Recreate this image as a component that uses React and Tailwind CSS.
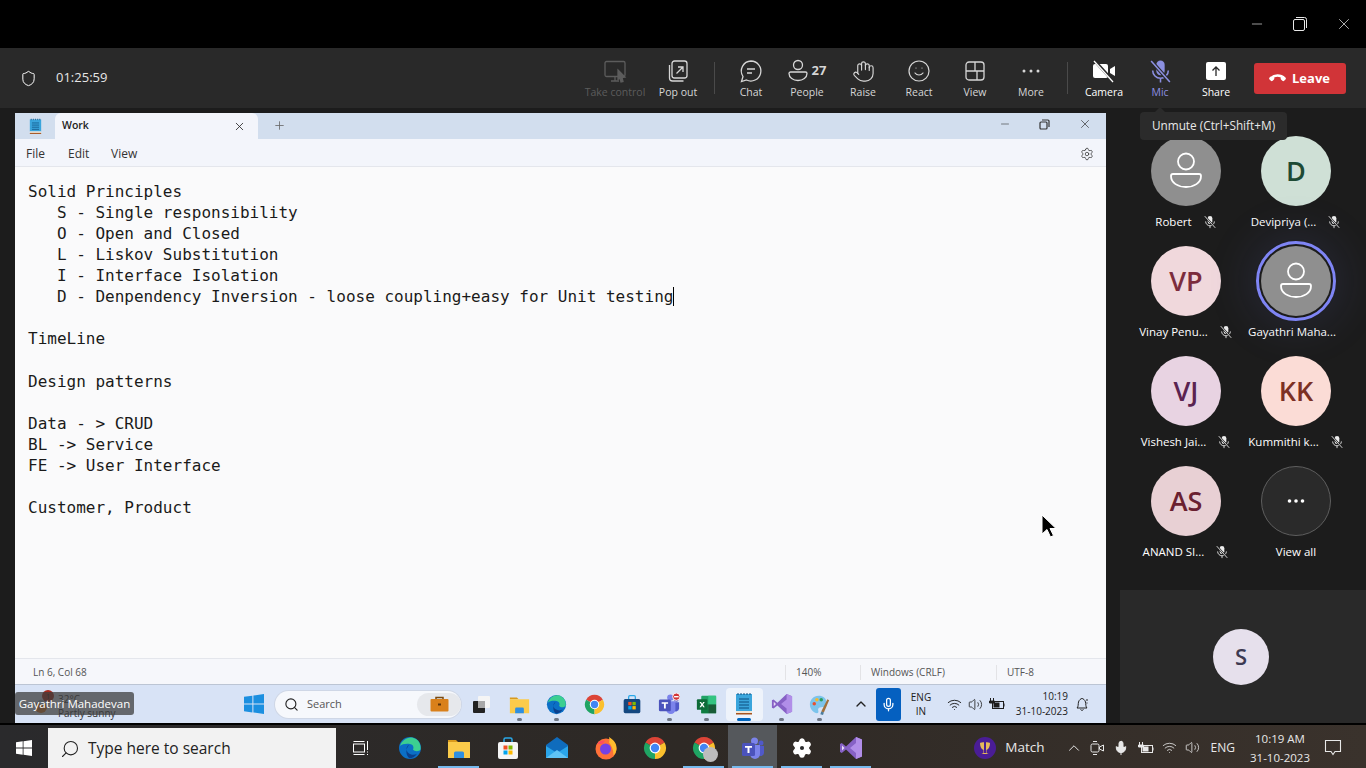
import React from 'react';
import { ChevronUp, Mic, Search, Settings, Volume2, Wifi, X, Minus, Plus, Hand, Smile, Shield, Phone } from 'lucide-react';

const NOTE_LINES = [
  'Solid Principles',
  '   S - Single responsibility',
  '   O - Open and Closed',
  '   L - Liskov Substitution',
  '   I - Interface Isolation',
  '   D - Denpendency Inversion - loose coupling+easy for Unit testing',
  '',
  'TimeLine',
  '',
  'Design patterns',
  '',
  'Data - > CRUD',
  'BL -> Service',
  'FE -> User Interface',
  '',
  'Customer, Product',
];

const PEOPLE = [
  { name: 'Robert', muted: true, person: true, bg: 'bg-[#8f8f8f]', fg: 'text-white' },
  { name: 'Devipriya (...', muted: true, initials: 'D', bg: 'bg-[#cfe0d6]', fg: 'text-[#1d4a34]' },
  { name: 'Vinay Penu...', muted: true, initials: 'VP', bg: 'bg-[#f0d8dc]', fg: 'text-[#7c2c3c]' },
  { name: 'Gayathri Maha...', person: true, ring: true, bg: 'bg-[#8f8f8f]', fg: 'text-white' },
  { name: 'Vishesh Jai...', muted: true, initials: 'VJ', bg: 'bg-[#e8d3e2]', fg: 'text-[#5a2350]' },
  { name: 'Kummithi k...', muted: true, initials: 'KK', bg: 'bg-[#fbdcd6]', fg: 'text-[#7c3024]' },
  { name: 'ANAND SI...', muted: true, initials: 'AS', bg: 'bg-[#e8d0d4]', fg: 'text-[#6a2030]' },
];

// filled mic with a slash, the Teams muted glyph
const MutedMic = ({ size = 14, gap = '#1c1c1c', className }) => (
  <svg width={size} height={size} viewBox="0 0 24 24" fill="none" stroke="currentColor" className={className}>
    <rect x="8" y="1.500" width="8" height="14" rx="4" fill="currentColor" stroke="none" />
    <path d="M4.500 11a7.500 7.500 0 0 0 15 0M12 18.500v4" strokeWidth="1.500" />
    <path d="M3 2l18 20" stroke={gap} strokeWidth="3.500" />
    <path d="M3 2l18 20" strokeWidth="1.500" />
  </svg>
);

const PersonGlyph = () => (
  <svg width="34" height="38" viewBox="0 0 34 38" fill="none" stroke="white" strokeWidth="1.800">
    <circle cx="17" cy="9.500" r="8" />
    <path d="M4 22h26a2 2 0 0 1 2 2c0 7-7 11-15 11S2 31 2 24a2 2 0 0 1 2-2z" />
  </svg>
);

const WinLogo = ({ className = 'fill-white', size = 16 }) => (
  <svg width={size} height={size} viewBox="0 0 16 16" className={className}>
    <path d="M0 2.200 6.700 1.300v6.300H0zM7.500 1.200 16 0v7.600H7.500zM0 8.400h6.700v6.300L0 13.800zM7.500 8.400H16V16l-8.500-1.200z" />
  </svg>
);

const Chrome = ({ size = 24 }) => (
  <svg width={size} height={size} viewBox="0 0 24 24">
    <path d="M12 12 2.470 6.500a11 11 0 0 1 19.060 0z" fill="#dc4437" />
    <path d="M12 12 2.470 6.500A11 11 0 0 0 12 23z" fill="#1fa463" />
    <path d="M12 12l9.530-5.500A11 11 0 0 1 12 23z" fill="#fbc02d" />
    <circle cx="12" cy="12" r="5.400" fill="white" />
    <circle cx="12" cy="12" r="4.200" fill="#4285f4" />
  </svg>
);

const Edge = ({ size = 24 }) => (
  <svg width={size} height={size} viewBox="0 0 24 24">
    <circle cx="12" cy="12" r="11" fill="#0b6fc6" />
    <path d="M2 10C4 3 12-1 18 3c4 2.500 5 7 4.500 10.500-1 2-6 2.500-7.500 0 1-2 .5-5-3-5.500C8 7.500 4 8 2 10z" fill="#3ccf91" />
    <path d="M11 9c-3 1-3.500 6 0 8.500 2.500 1.700 6 1.500 8 .3-2 3-5 4.500-7.500 4.500C8 20 7 13 11 9z" fill="#0a3f8c" />
  </svg>
);

const Folder = ({ size = 24 }) => (
  <svg width={size} height={size} viewBox="0 0 24 24">
    <path d="M1 4h8l2 2H1z" fill="#d99a1c" />
    <rect x="1" y="6" width="22" height="16" fill="#fbcb4a" />
    <path d="M7 22v-5a1.500 1.500 0 0 1 1.500-1.500h7A1.500 1.500 0 0 1 17 17v5z" fill="#2f8fe0" />
  </svg>
);

const Store = ({ size = 24, dark = false }) => (
  <svg width={size} height={size} viewBox="0 0 24 24">
    <path d="M8 6V3.500A1.500 1.500 0 0 1 9.500 2h5A1.500 1.500 0 0 1 16 3.500V6" fill="none" stroke="#29a8e8" strokeWidth="1.500" />
    <rect x="2" y="6" width="20" height="17" rx="2" fill={dark ? '#14477f' : '#f5f5f5'} />
    <rect x="7.500" y="9.500" width="4" height="4" fill="#f25022" />
    <rect x="12.500" y="9.500" width="4" height="4" fill="#7fba00" />
    <rect x="7.500" y="14.500" width="4" height="4" fill="#00a4ef" />
    <rect x="12.500" y="14.500" width="4" height="4" fill="#ffb900" />
  </svg>
);

const Mail = ({ size = 24 }) => (
  <svg width={size} height={size} viewBox="0 0 24 24">
    <path d="M1 9 12 1l11 8v13H1z" fill="#0f6cbd" />
    <path d="M1 10l11 7 11-7v12H1z" fill="#2aa5ea" />
    <path d="M1 22l11-8 11 8z" fill="#5fc3f5" />
  </svg>
);

const Firefox = ({ size = 24 }) => (
  <svg width={size} height={size} viewBox="0 0 24 24">
    <circle cx="12" cy="13" r="10.500" fill="#ff7139" />
    <path d="M15 1c5 3 8 7 7.500 12-.3 3-1.500 5-3 6.500 0-6-2-10-4.500-13C15.500 5 15.500 3 15 1z" fill="#ffbd2e" />
    <circle cx="11.500" cy="13" r="5.500" fill="#7542e5" />
    <path d="M3 8c2-3 5-4 8-3.500L9 8z" fill="#ff4f5e" />
  </svg>
);

const Teams = ({ size = 24, badge = false }) => (
  <svg width={size} height={size} viewBox="0 0 24 24">
    <circle cx="13.500" cy="5" r="3.500" fill="#7b83eb" />
    <circle cx="20" cy="7" r="2.500" fill="#5059c9" />
    <path d="M17 10h6v7a3.500 3.500 0 0 1-6 2z" fill="#5059c9" />
    <path d="M9 9h10v9a5 5 0 0 1-10 0z" fill="#7b83eb" />
    <rect x="1" y="7" width="13" height="13" rx="1.500" fill="#4b53bc" />
    <path d="M4 10h7v1.800H8.500V17h-2v-5.200H4z" fill="white" />
    {badge && <circle cx="20" cy="4" r="4" fill="#d13438" stroke="white" />}
    {badge && <rect x="17.500" y="3.300" width="5" height="1.500" fill="white" />}
  </svg>
);

const VisualStudio = ({ size = 24 }) => (
  <svg width={size} height={size} viewBox="0 0 24 24">
    <path d="M17 1l6 2.500v17L17 23 7 13.500 2.800 17 1 16V8l1.800-1L7 10.500z" fill="#8661c5" />
    <path d="M17 1l6 2.500v17L17 23zM17 7l-6 5 6 5z" fill="#b18ee8" fillRule="evenodd" />
    <path d="M3 9.500v5l2.500-2.500z" fill="#e7dcf7" />
  </svg>
);

const Excel = ({ size = 24 }) => (
  <svg width={size} height={size} viewBox="0 0 24 24">
    <rect x="6" y="2" width="17" height="20" rx="1" fill="#21a366" />
    <rect x="14" y="2" width="9" height="10" fill="#33c481" />
    <rect x="6" y="12" width="8" height="10" fill="#107c41" />
    <rect x="14" y="12" width="9" height="10" fill="#185c37" />
    <rect x="1" y="6" width="12" height="12" rx="1" fill="#0e6b38" />
    <path d="M4 9h1.800L7 11l1.200-2H10l-2 3 2 3H8.200L7 13l-1.200 2H4l2-3z" fill="white" />
  </svg>
);

const Notepad = ({ size = 24 }) => (
  <svg width={size} height={size} viewBox="0 0 24 24">
    <rect x="4" y="2" width="16" height="17" fill="#3aa5dc" />
    <path d="M4 19h16v2H4z" fill="#f0e6d6" />
    <path d="M4 21h16v1.500H4z" fill="#a6541f" />
    <path d="M7 7h10M7 10h10M7 13h10M7 16h10" stroke="#0d4e80" strokeWidth="1" />
    <path d="M6 1v2M9 1v2M12 1v2M15 1v2M18 1v2" stroke="#0d4e80" strokeWidth="1" />
  </svg>
);

const Paint = ({ size = 24 }) => (
  <svg width={size} height={size} viewBox="0 0 24 24">
    <path d="M11 2C5 2 1 7 1 12c0 6 5 10 8 10 2 0 2-2 1.500-3.500S11 15 14 15c3 0 6 0 6-5 0-5-4-8-9-8z" fill="#7cc4ec" />
    <circle cx="6" cy="11" r="2" fill="#e8502f" />
    <circle cx="9" cy="6.500" r="2" fill="#f5b82e" />
    <circle cx="14" cy="6.500" r="2" fill="#2f9e5f" />
    <path d="M21 6l2 1-6 14-3-1z" fill="#a0703c" />
    <path d="M14 20l3 1-1 3-3-1z" fill="#4e7d9c" />
  </svg>
);

const TaskView = () => (
  <svg width="18" height="18" viewBox="0 0 18 18" fill="none" stroke="white" strokeWidth="1">
    <rect x="1.500" y="5" width="11" height="8" />
    <path d="M1.500 2.500h11M1.500 15.500h11M15.500 2v9M15 13h1M15 15.500h1" />
  </svg>
);

const Cricket = () => (
  <svg width="22" height="22" viewBox="0 0 22 22">
    <circle cx="11" cy="11" r="11" fill="#4a1d96" />
    <path d="M6 6c0-1 10-1 10 0 0 3-1 6-3.500 7v3l2 1H7.500l2-1v-3C7 12 6 9 6 6z" fill="#e8b95a" />
    <rect x="10" y="5" width="2" height="11" fill="#4a1d96" />
  </svg>
);

const BatteryCharge = ({ className }) => (
  <svg width="16" height="14" viewBox="0 0 16 14" fill="none" stroke="currentColor" className={className}>
    <rect x="3.500" y="4.500" width="11" height="7" />
    <path d="M15 6.500v3" />
    <rect x="5" y="6" width="5" height="4" fill="currentColor" />
    <path d="M1.500 1v3M4.500 1v3M.5 4h5v2h-5z" fill="currentColor" />
  </svg>
);

const ToolButton = ({ label, tone = 'text-[#d6d6d6]', children }) => (
  <div className={`flex w-[56px] flex-col items-center ${tone}`}>
    <div className="flex h-[28px] items-center justify-center">{children}</div>
    <span className="whitespace-nowrap text-[10.500px] leading-[14px]">{label}</span>
  </div>
);

const Toolbar = () => (
  <div className="flex h-[60px] items-center bg-[#292929] pr-[20px] font-['Open_Sans',sans-serif]">
    <Shield size={17} strokeWidth={1.400} className="ml-[20px] text-white" />
    <span className="ml-[19px] text-[13px] text-[#e6e6e6]">01:25:59</span>

    <div className="ml-auto flex items-center">
      <ToolButton label="Take control" tone="text-[#5c5c5c]">
        <svg width="24" height="24" viewBox="0 0 24 24" fill="none" stroke="currentColor" strokeWidth="1.300">
          <rect x="2" y="2.500" width="20" height="15" rx="1.500" />
          <path d="M8 22h8M12 18v4" />
          <path d="M15 11l7 7-3 .5 1 4-2 .5-1-4-2 1.500z" fill="#5c5c5c" />
        </svg>
      </ToolButton>
      <div className="ml-[7px]">
        <ToolButton label="Pop out">
          <svg width="22" height="24" viewBox="0 0 22 24" fill="none" stroke="currentColor" strokeWidth="1.300">
            <rect x="5" y="2" width="15" height="17" rx="2.500" />
            <path d="M2.500 6v13a3 3 0 0 0 3 3h11M9.500 14.500l6-6M11 8h5v5" />
          </svg>
        </ToolButton>
      </div>
      <div className="mx-[8px] h-[32px] w-px bg-[#4a4a4a]" />
      <ToolButton label="Chat">
        <svg width="24" height="24" viewBox="0 0 24 24" fill="none" stroke="currentColor" strokeWidth="1.300">
          <path d="M12 2a10 10 0 1 1-4.500 19L2.500 22.500 4 17.500A10 10 0 0 1 12 2z" />
          <path d="M8 10h8M8 14h5" />
        </svg>
      </ToolButton>
      <ToolButton label="People">
        <div className="flex items-center">
          <svg width="20" height="24" viewBox="0 0 20 24" fill="none" stroke="currentColor" strokeWidth="1.300">
            <circle cx="10" cy="6" r="4.500" />
            <path d="M2.500 13h15a1.500 1.500 0 0 1 1.500 1.500c0 4-4 7-9 7s-9-3-9-7A1.500 1.500 0 0 1 2.500 13z" />
          </svg>
          <span className="ml-[4px] text-[13px] font-bold">27</span>
        </div>
      </ToolButton>
      <ToolButton label="Raise"><Hand size={23} strokeWidth={1.200} /></ToolButton>
      <ToolButton label="React"><Smile size={24} strokeWidth={1.200} /></ToolButton>
      <ToolButton label="View">
        <svg width="22" height="22" viewBox="0 0 22 22" fill="none" stroke="currentColor" strokeWidth="1.300">
          <rect x="2" y="2" width="18" height="18" rx="3" />
          <path d="M11 2v9M2 11h18M13 11v9" />
        </svg>
      </ToolButton>
      <ToolButton label="More">
        <svg width="22" height="8" viewBox="0 0 22 8" fill="currentColor">
          <circle cx="4" cy="4" r="1.500" /><circle cx="11" cy="4" r="1.500" /><circle cx="18" cy="4" r="1.500" />
        </svg>
      </ToolButton>
      <div className="mx-[8px] h-[32px] w-px bg-[#4a4a4a]" />
      <ToolButton label="Camera" tone="text-white">
        <svg width="26" height="26" viewBox="0 0 26 26" fill="white">
          <rect x="2" y="6" width="15" height="14" rx="2" />
          <path d="M19 11l5-3v10l-5-3z" />
          <path d="M3 2l20 22" stroke="#292929" strokeWidth="3" />
          <path d="M3 3l19 21" stroke="white" strokeWidth="1.300" />
        </svg>
      </ToolButton>
      <ToolButton label="Mic" tone="text-[#8b8fe0]"><MutedMic size={25} gap="#292929" /></ToolButton>
      <ToolButton label="Share" tone="text-white">
        <svg width="22" height="20" viewBox="0 0 22 20">
          <rect x="1" y="1" width="20" height="18" rx="2" fill="white" />
          <path d="M11 15V6M7.500 9.500 11 6l3.500 3.500" stroke="#292929" strokeWidth="1.300" fill="none" />
        </svg>
      </ToolButton>
      <button className="ml-[10px] flex h-[31px] w-[92px] items-center justify-center gap-[7px] rounded-[3px] bg-[#d13438] pt-px text-[13px] font-bold text-white">
        <Phone size={15} fill="white" strokeWidth={0} className="rotate-[135deg]" />
        Leave
      </button>
    </div>
  </div>
);

const StatusCell = ({ width, children }) => (
  <div className={`flex items-center ${width} border-l border-[#e3e3e6] pl-[10px]`}>{children}</div>
);

const InnerDock = ({ active, dot = true, children }) => (
  <div className={`relative flex h-[33px] w-[37.500px] items-center justify-center rounded-[4px] ${active ? 'bg-[#eef3fb]' : ''}`}>
    {children}
    {dot && <span className={`absolute bottom-0 h-[3px] rounded-full ${active ? 'w-[14px] bg-[#0067c0]' : 'w-[5px] bg-[#6f7785]'}`} />}
  </div>
);

const InnerTaskbar = () => (
  <div className="relative flex h-[39px] items-center border-t border-[#bcc5d4] bg-[#d8e3f6] font-['Open_Sans',sans-serif] text-[#1c1c1c]">
    <svg width="20" height="20" viewBox="0 0 20 20" className="ml-[18px]">
      <circle cx="8" cy="13" r="6" fill="#d9772b" />
      <path d="M4 10a4 4 0 0 1 7-3 4 4 0 0 1 6 3H4z" fill="#9fb2c8" />
    </svg>
    <div className="ml-[5px] flex flex-col pt-[3px] text-[10px] leading-[14px] text-[#333]">
      <span>32°C</span>
      <span>Partly sunny</span>
    </div>

    <div className="ml-auto mr-[16px] flex items-center">
      <div className="mr-[11px]"><WinLogo className="fill-[#1b8fe0]" size={20} /></div>
      <div className="flex h-[27px] w-[186px] items-center rounded-full bg-[#f6f8fc] pl-[9px] text-[11px] text-[#555] shadow-[0_0_0_1px_#cfd7e6]">
        <Search size={15} strokeWidth={1.800} className="text-[#222]" />
        <span className="ml-[8px]">Search</span>
        <span className="ml-auto flex h-[23px] w-[44px] items-center justify-center rounded-full bg-[#e6e8ec]">
          <svg width="19" height="16" viewBox="0 0 19 16">
            <path d="M6 3V1.500h7V3" fill="none" stroke="#7a4a12" strokeWidth="1.500" />
            <rect x="0.500" y="3" width="18" height="12.500" rx="1" fill="#d9801a" />
            <rect x="8" y="7.500" width="3" height="2" fill="#5c3208" />
          </svg>
        </span>
      </div>
      <div className="ml-[2px] flex items-center">
        <InnerDock dot={false}>
          <svg width="19" height="19" viewBox="0 0 19 19">
            <rect x="6" y="1" width="12" height="12" rx="1" fill="#f5f5f5" />
            <rect x="1" y="6" width="12" height="12" rx="1" fill="#222" />
            <rect x="6" y="6" width="7" height="7" fill="#a8a8a8" />
          </svg>
        </InnerDock>
        <InnerDock><Folder size={21} /></InnerDock>
        <InnerDock><Edge size={21} /></InnerDock>
        <InnerDock dot={false}><Chrome size={21} /></InnerDock>
        <InnerDock dot={false}><Store size={20} dark /></InnerDock>
        <InnerDock><Teams size={22} badge /></InnerDock>
        <InnerDock><Excel size={21} /></InnerDock>
        <InnerDock active><Notepad size={24} /></InnerDock>
        <InnerDock><VisualStudio size={22} /></InnerDock>
        <InnerDock><Paint size={21} /></InnerDock>
      </div>
      <ChevronUp size={16} strokeWidth={2} className="ml-[15px] text-[#222]" />
      <div className="ml-[7px] flex h-[33px] w-[25px] items-center justify-center rounded-[3px] bg-[#0560c0]">
        <Mic size={15} className="text-white" />
      </div>
      <div className="ml-[9px] w-[22px] text-center text-[10px] leading-[14px]">ENG<br />IN</div>
      <div className="ml-[15px] flex items-center gap-[6px]">
        <Wifi size={15} strokeWidth={1.500} />
        <Volume2 size={15} strokeWidth={1.300} />
        <BatteryCharge />
      </div>
      <div className="ml-[1px] w-[62px] text-right text-[10px] leading-[15px]">10:19<br />31-10-2023</div>
      <svg width="16" height="16" viewBox="0 0 16 16" fill="none" stroke="#222" className="ml-[6px]">
        <path d="M3 12c1.500-1 1-4 1.500-6S7 2.500 8 2.500 11 4 11.500 6s0 5 1.500 6zM6.500 13.500c.5 1 2.500 1 3 0M13 3v2M13 6.500v1" />
      </svg>
    </div>

    <span className="absolute left-[27px] top-[5px] flex h-[12px] w-[12px] items-center justify-center rounded-full bg-[#a52a1d] text-[8px] text-[#222]">1</span>
    {/* presenter name tag over the shared screen */}
    <div className="absolute left-0 top-[7px] flex h-[23px] w-[119px] items-center justify-center rounded-[3px] bg-[#3d3d3d]/75 text-[11.500px] text-white">
      Gayathri Mahadevan
    </div>
  </div>
);

const NotepadWindow = () => (
  <div className="flex w-[1091px] flex-col font-['Open_Sans',sans-serif]">
    {/* tabs */}
    <div className="flex h-[26px] items-end bg-[#d2deee]">
      <div className="flex h-[26px] w-[40px] items-center justify-center"><Notepad size={17} /></div>
      <div className="flex h-[26px] w-[203px] items-center rounded-t-[6px] bg-[#f3f5fb] pl-[7px] pr-[12px] text-[10.500px] font-semibold text-[#222]">
        Work
        <X size={13} strokeWidth={1.500} className="ml-auto" />
      </div>
      <Plus size={13} strokeWidth={1.500} className="mb-[7px] ml-[15px] text-[#666]" />
      <div className="ml-auto flex h-[26px] items-center gap-[28px] pr-[14px] pb-[4px] text-[#333]">
        <Minus size={12} strokeWidth={1.200} />
        <svg width="11" height="11" viewBox="0 0 11 11" fill="none" stroke="currentColor" strokeWidth="1.200">
          <rect x="1" y="3" width="7" height="7" rx="1" />
          <path d="M3 1h6a1 1 0 0 1 1 1v6" />
        </svg>
        <X size={14} strokeWidth={1.200} />
      </div>
    </div>
    {/* menu */}
    <div className="flex h-[28px] items-center border-b border-[#e4e6ec] bg-[#f3f5fb] pl-[11px] pr-[12px] pt-[2px] text-[12px] text-[#333]">
      <span className="w-[41px]">File</span>
      <span className="w-[44px] pl-px">Edit</span>
      <span>View</span>
      <Settings size={14} strokeWidth={1.300} className="ml-auto" />
    </div>
    {/* editor */}
    <div className="h-[491px] overflow-hidden bg-[#fafafb] pl-[13px] pt-[14px] font-['DejaVu_Sans_Mono',monospace] text-[16px] leading-[21px] text-[#1a1a1a]">
      {NOTE_LINES.map((line, i) => (
        <div key={i} className="h-[21.070px] whitespace-pre">
          {line}
          {i === 5 && <span className="border-r border-black" />}
        </div>
      ))}
    </div>
    {/* status */}
    <div className="flex h-[26px] items-center border-t border-[#e4e6ec] bg-[#f6f7fb] pt-[2px] text-[10px] text-[#555]">
      <div className="w-[770px] pl-[18px]">Ln 6, Col 68</div>
      <StatusCell width="w-[75px]">140%</StatusCell>
      <StatusCell width="w-[136px]">Windows (CRLF)</StatusCell>
      <StatusCell width="w-[110px]">UTF-8</StatusCell>
    </div>
    <InnerTaskbar />
  </div>
);

const PersonTile = ({ name, muted, person, initials, ring, bg, fg }) => (
  <div className="flex h-[110px] w-[110px] flex-col items-center">
    <div className="relative flex h-[70px] w-[70px] items-center justify-center">
      {ring && <div className="absolute -inset-[5px] rounded-full border-[3px] border-[#7f85f5] shadow-[0_0_40px_12px_rgba(90,100,180,0.12)]" />}
      <div className={`flex h-[70px] w-[70px] items-center justify-center rounded-full ${bg} ${fg} text-[27px] font-semibold`}>
        {person ? <PersonGlyph /> : initials}
      </div>
    </div>
    <div className={`mt-[8px] flex h-[15px] items-center gap-[11px] text-[11.500px] text-white ${ring ? 'pr-[8px]' : ''}`}>
      <span className="whitespace-nowrap">{name}</span>
      {muted && <MutedMic size={14} className="text-[#ececec]" />}
    </div>
  </div>
);

const SidePanel = () => (
  <div className="flex w-[260px] flex-col font-['Open_Sans',sans-serif]">
    <div className="grid grid-cols-[110px_110px] pl-[25px] pt-[28px]">
      {PEOPLE.map((p) => <PersonTile key={p.name} {...p} />)}
      <div className="flex h-[110px] w-[110px] flex-col items-center">
        <div className="flex h-[70px] w-[70px] items-center justify-center rounded-full border border-[#5e5e5e] bg-[#2a2a2a]">
          <svg width="20" height="6" viewBox="0 0 20 6" fill="white">
            <circle cx="3.500" cy="3" r="1.800" /><circle cx="10" cy="3" r="1.800" /><circle cx="16.500" cy="3" r="1.800" />
          </svg>
        </div>
        <span className="mt-[8px] h-[15px] text-[11.500px] leading-[15px] text-white">View all</span>
      </div>
    </div>
    <div className="mt-auto ml-[14px] flex h-[133px] items-center justify-center bg-[#292929] pr-[4px]">
      <div className="flex h-[56px] w-[56px] items-center justify-center rounded-full bg-[#e6e0ec] text-[22px] font-semibold text-[#3d3a52]">S</div>
    </div>
  </div>
);

const TrayText = ({ children }) => <span className="whitespace-nowrap text-center text-[11.500px] leading-[19px] text-[#e8e8e8]">{children}</span>;

const Slot = ({ active, running, children }) => (
  <div className={`relative flex h-[43px] w-[49px] items-center justify-center pt-[2px] ${active ? 'bg-[#55585c]' : ''}`}>
    {children}
    {running && <span className="absolute bottom-0 left-[4px] right-[4px] h-[2px] bg-[#76b9ed]" />}
  </div>
);

const Taskbar = () => (
  <div className="mt-[2px] flex h-[43px] items-center bg-gradient-to-r from-[#2a2a2c] via-[#2e2925] to-[#3a322c] font-['Open_Sans',sans-serif]">
    <div className="flex h-[43px] w-[48px] items-center justify-center pt-[2px]"><WinLogo /></div>
    <div className="flex h-[40px] w-[288px] items-center self-end bg-[#f2f2f2] pl-[12px] pt-px text-[15.500px] text-[#222]">
      <Search size={20} strokeWidth={1.300} className="-scale-x-100" />
      <span className="ml-[8px]">Type here to search</span>
    </div>
    <Slot><TaskView /></Slot>
    <Slot><Edge /></Slot>
    <Slot running><Folder /></Slot>
    <Slot><Store /></Slot>
    <Slot><Mail /></Slot>
    <Slot><Firefox /></Slot>
    <Slot><Chrome /></Slot>
    <Slot running>
      <Chrome />
      <span className="absolute left-[24px] top-[22px] h-[15px] w-[15px] rounded-full bg-[#bdbdbd]" />
    </Slot>
    <Slot active running><Teams /></Slot>
    <Slot running><Settings size={22} fill="white" stroke="white" strokeWidth={1.500} className="[&>circle]:fill-[#2a2a2c]" /></Slot>
    <Slot running><VisualStudio /></Slot>

    <div className="ml-auto flex h-full items-center pr-[24px] pt-[2px] text-[#e8e8e8]">
      <Cricket />
      <span className="ml-[9px] text-[13.500px]">Match</span>
      <ChevronUp size={18} strokeWidth={1.300} className="ml-[20px]" />
      <svg width="16" height="16" viewBox="0 0 16 16" fill="none" stroke="currentColor" className="ml-[6px]">
        <rect x="2" y="4" width="8" height="8" rx="1.500" /><path d="M10.500 7l4-2v6l-4-2zM4 1.500h4M4 14.500h4" />
      </svg>
      <Mic size={16} fill="currentColor" strokeWidth={1.500} className="ml-[8px]" />
      <BatteryCharge className="ml-[9px]" />
      <Wifi size={15} strokeWidth={1.300} className="ml-[8px]" />
      <Volume2 size={15} strokeWidth={1.300} className="ml-[8px]" />
      <span className="ml-[11px] text-[12px]">ENG</span>
      <div className="ml-[14px] flex w-[62px] flex-col"><TrayText>10:19 AM</TrayText><TrayText>31-10-2023</TrayText></div>
      <svg width="18" height="17" viewBox="0 0 18 17" fill="none" stroke="currentColor" strokeWidth="1.100" className="ml-[13px]">
        <path d="M1.500 1.500h15v11H11l-2 3-2-3H1.500z" />
      </svg>
    </div>
  </div>
);

export default function App() {
  return (
    <div className="relative flex h-[768px] w-[1366px] flex-col overflow-hidden bg-black">
      {/* window frame */}
      <div className="flex h-[48px] items-center justify-end gap-[27px] bg-black pr-[13px] text-[#e8e8e8]">
        <Minus size={16} strokeWidth={1} />
        <svg width="16" height="16" viewBox="0 0 16 16" fill="none" stroke="currentColor">
          <rect x="1.500" y="3.500" width="11" height="11" rx="1.500" />
          <path d="M4 1.500h8.500a2 2 0 0 1 2 2V12" />
        </svg>
        <X size={18} strokeWidth={1} />
      </div>
      <Toolbar />

      <div className="flex h-[615px] bg-[#1c1c1c] pl-[15px]">
        <div className="flex pt-[5px]"><NotepadWindow /></div>
        <SidePanel />
      </div>

      <Taskbar />

      {/* unmute tooltip */}
      <div className="absolute left-[1140px] top-[112px] flex h-[28px] w-[147px] items-center justify-center rounded-[4px] bg-[#2b2b2b] font-['Open_Sans',sans-serif] text-[11.800px] text-[#e8e8e8]">
        <span className="absolute -top-[5px] left-[15px] h-0 w-0 border-x-[5px] border-b-[5px] border-x-transparent border-b-[#2b2b2b]" />
        Unmute (Ctrl+Shift+M)
      </div>

      {/* mouse pointer */}
      <svg width="16" height="24" viewBox="0 0 16 24" className="absolute left-[1041px] top-[514px]">
        <path d="M1 1v19l5-4.500 3.500 7.500 3-1.500-3.500-7h6z" fill="black" stroke="white" strokeWidth="1" />
      </svg>
    </div>
  );
}
